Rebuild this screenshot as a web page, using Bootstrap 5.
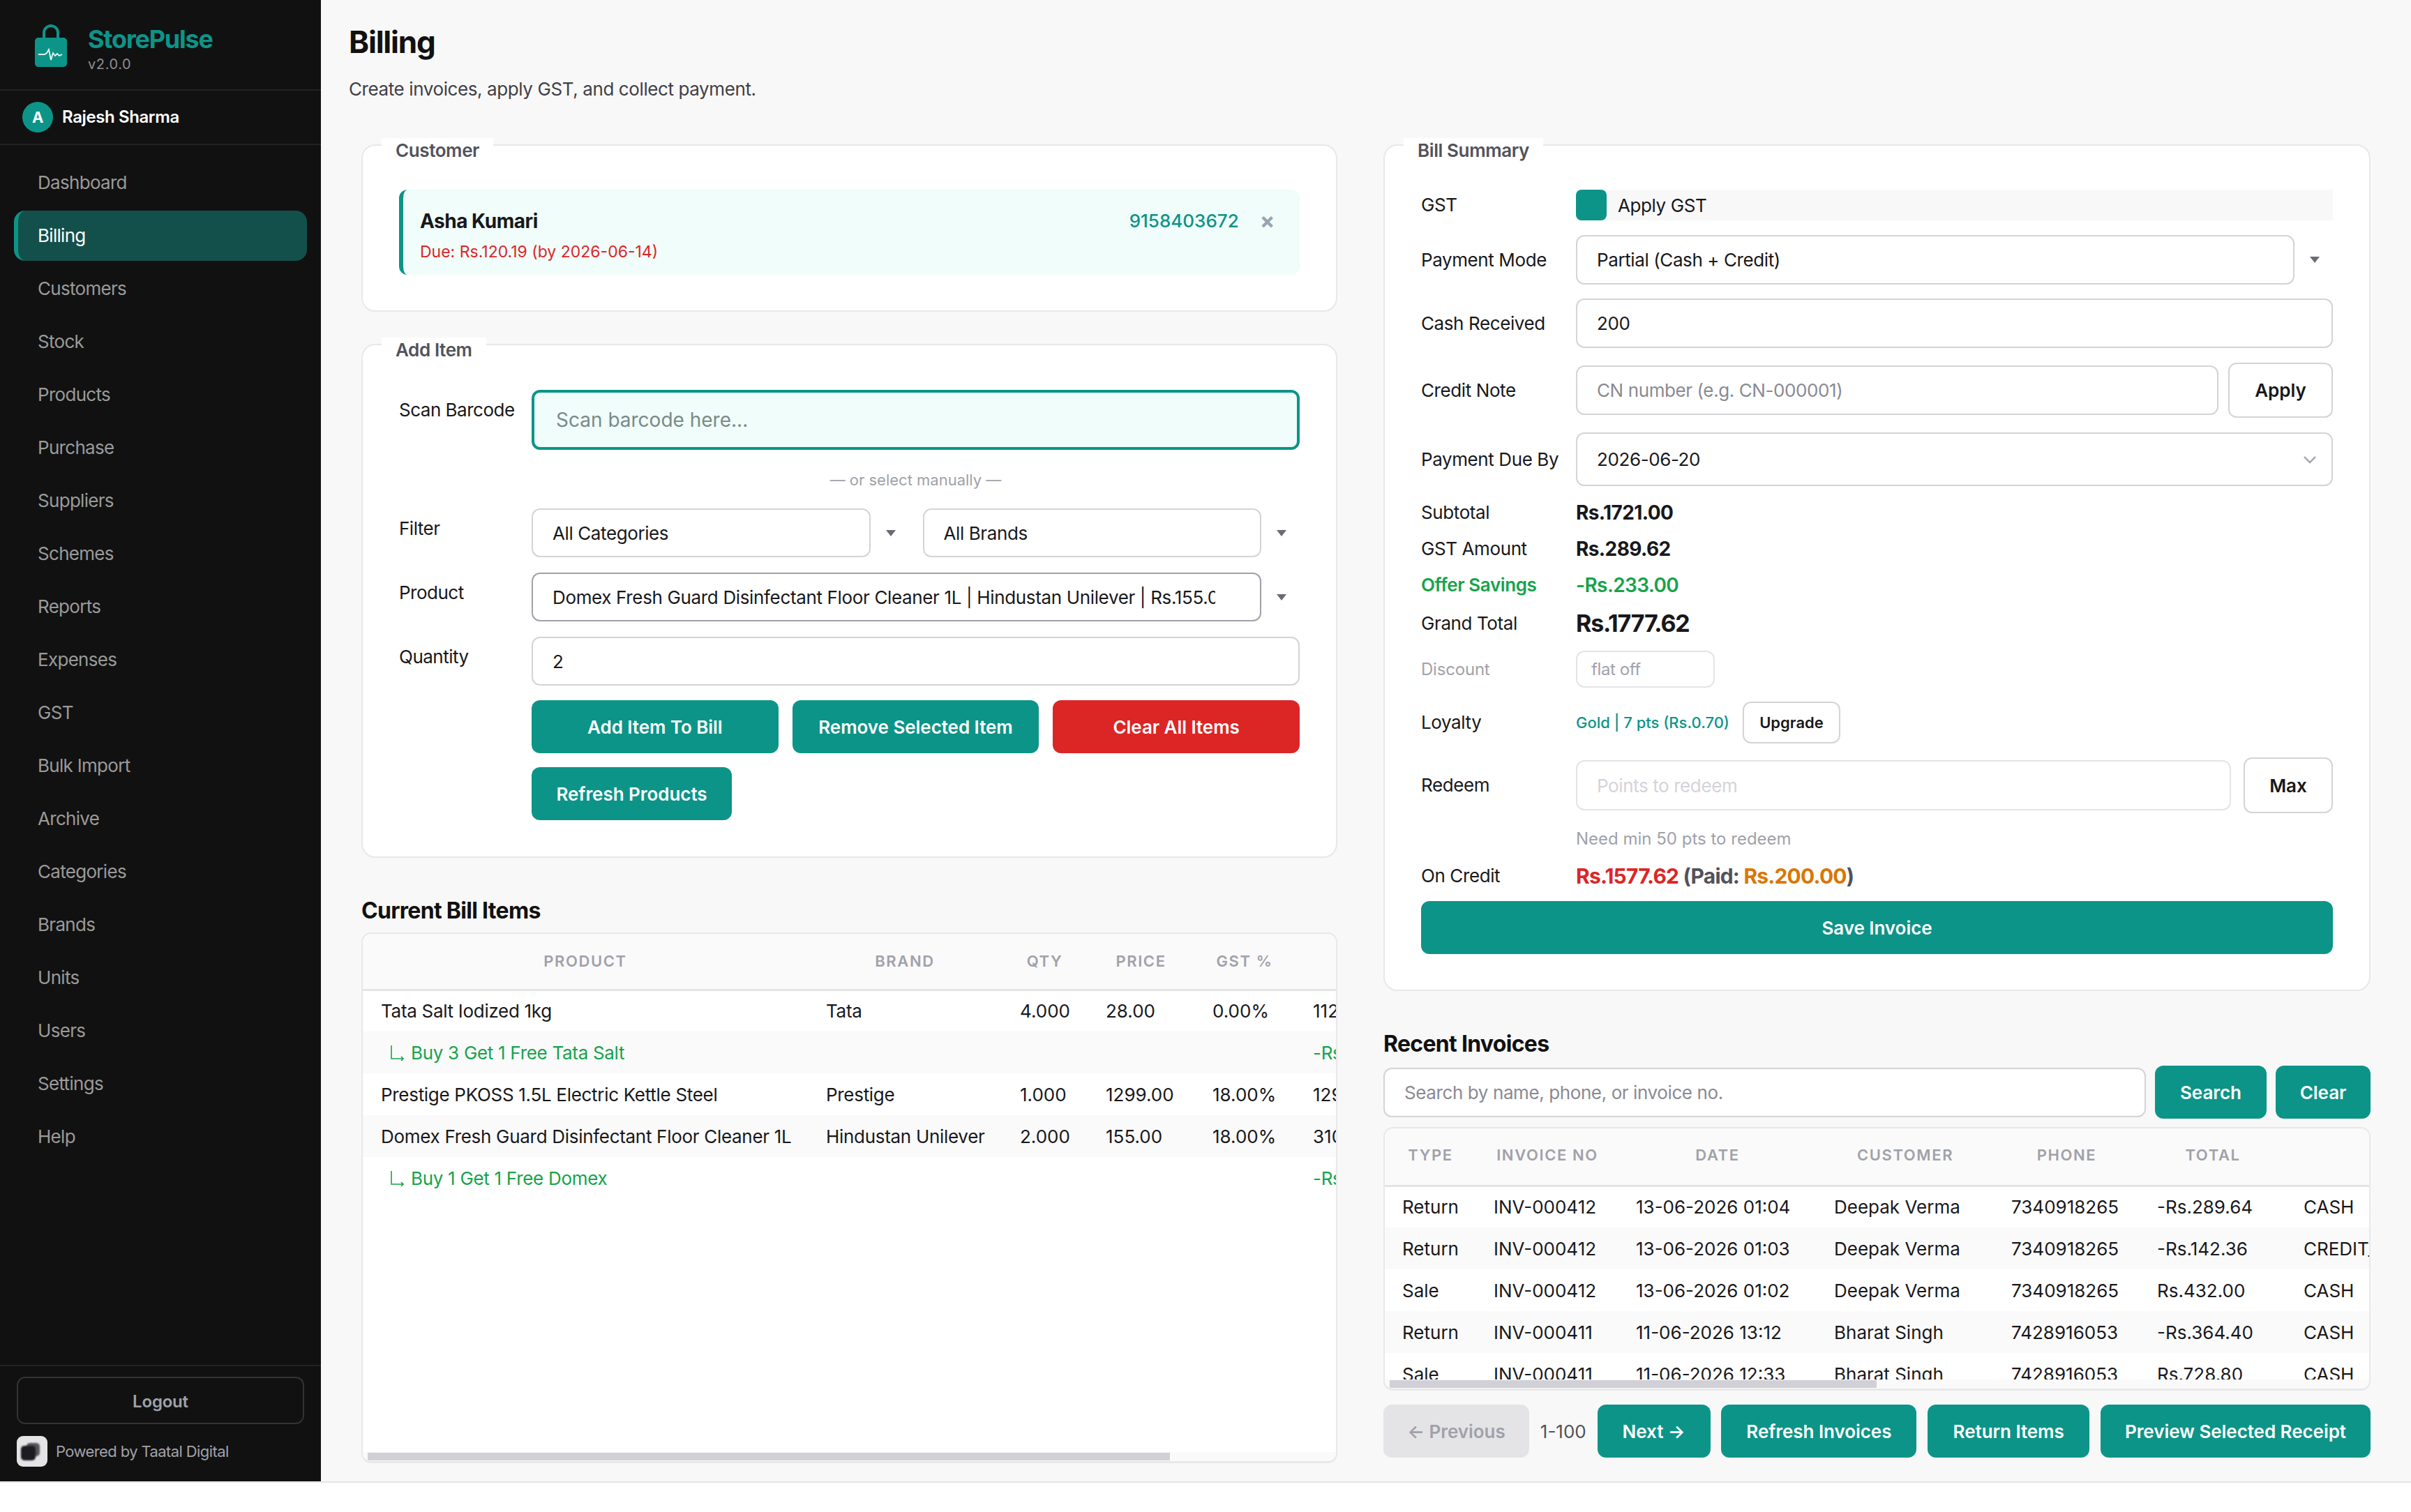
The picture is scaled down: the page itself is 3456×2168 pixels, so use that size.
<!DOCTYPE html>
<html lang="en">
<head>
<meta charset="UTF-8">
<title>StorePulse - Billing</title>
<link rel="stylesheet" href="https://cdn.jsdelivr.net/npm/bootstrap@5.3.3/dist/css/bootstrap.min.css">
<style>
    html, body { height: 100%; }
    body { background: #fff; font-family: Inter, "Liberation Sans", sans-serif; font-size: 26px; letter-spacing: -.4px; color: #18181b; overflow: hidden; }
    .app-frame { height: 2126px; border-bottom: 2px solid #e4e4e7; background: #f8f8f8; }

    /* sidebar */
    .side-panel { width: 460px; flex: none; background: #111; }
    .side-head { height: 130px; border-bottom: 2px solid #222; padding-left: 40px; gap: 20px; }
    .side-head svg { margin-top: 6px; }
    .brand-text { padding-top: 11px; }
    .brand-name { font-size: 36px; line-height: 40px; font-weight: 700; color: #0d9488; letter-spacing: -1.2px; }
    .brand-ver { font-size: 20px; line-height: 24px; color: #8e8e96; letter-spacing: .6px; margin-top: 4px; }
    .side-user { height: 78px; border-bottom: 2px solid #222; padding-left: 32px; gap: 13px; color: #fff; font-size: 24px; font-weight: 600; }
    .user-dot { width: 44px; height: 44px; border-radius: 50%; background: #0d9488; color: #fff; font-size: 22px; font-weight: 700; }
    .side-nav { padding: 18px 20px 0; gap: 4px; }
    .side-link { height: 72px; line-height: 72px; padding-left: 34px; color: #9a9a9a; border-radius: 16px; text-decoration: none; letter-spacing: -.7px; }
    .side-link.is-on { background: #14504b; color: #fff; border-left: 6px solid #0d9488; padding-left: 28px; }
    .side-foot { border-top: 2px solid #222; padding: 15px 24px 21px; }
    .logout-btn { width: 100%; height: 68px; padding: 4px 0 0; background: transparent; border: 2px solid #333; border-radius: 12px; color: #a1a1aa; font-size: 24px; font-weight: 600; letter-spacing: -.2px; }
    .logout-btn:hover { background: transparent; color: #a1a1aa; border-color: #333; }
    .powered-by { margin-top: 17px; gap: 12px; font-size: 22px; color: #a1a1aa; letter-spacing: -.6px; }

    /* main */
    .main-area { height: 2124px; padding: 34px 58px 26px 40px; min-width: 0; }
    .page-title { font-size: 44px; line-height: 52px; font-weight: 700; letter-spacing: -1.2px; margin: 0; color: #111; }
    .page-sub { line-height: 36px; margin: 24px 0 0; color: #3f3f46; }
    .two-cols { margin-top: 61px; padding-left: 18px; gap: 66px; min-height: 0; }
    .col-left { width: 1399px; flex: none; min-height: 0; }
    .col-right { width: 1415px; flex: none; min-height: 0; }

    .field-box { position: relative; background: #fff; border: 2px solid #e8e8ea; border-radius: 20px; padding: 63px 52px 51px; }
    .mt-add { margin-top: 46px; padding-top: 64px; padding-bottom: 52px; }
    .field-tag { position: absolute; top: -11px; left: 27px; height: 40px; padding: 0 20px; line-height: 36px; background: #fff; color: #52525b; font-weight: 600; }
    .section-head { font-size: 32px; line-height: 40px; font-weight: 700; letter-spacing: -.7px; color: #111; margin: 0; }
    .head-bill { margin-top: 56px; margin-bottom: 11px; }
    .head-inv { margin-top: 56px; }

    .cust-box { height: 122px; background: #f0fdfa; border-left: 6px solid #0d9488; border-radius: 12px; padding: 27px 36px 0 24px; }
    .cust-name { font-size: 28px; line-height: 36px; font-weight: 700; letter-spacing: -.5px; color: #18181b; }
    .cust-due { font-size: 23px; line-height: 28px; color: #dc2626; margin-top: 12px; letter-spacing: 0; }
    .cust-phone { color: #0d9488; font-weight: 500; line-height: 36px; letter-spacing: 0; }
    .cust-x { font-size: 32px; line-height: 36px; font-weight: 700; color: #9ca3af; margin-left: 30px; }

    .row-label { width: 190px; flex: none; line-height: 36px; padding-top: 11px; margin: 0; letter-spacing: -.5px; }
    .sum-label { width: 222px; flex: none; line-height: 36px; }
    .gap-or { margin-top: 28px; }
    .gap-filter { margin-top: 26px; }
    .gap-next { margin-top: 22px; }
    .sel-gap { gap: 20px; }
    .form-control.fld, .form-select.fld { height: 70px; border: 2px solid #d4d4d8; border-radius: 12px; font-size: 26px; letter-spacing: -.4px; color: #18181b; padding: 0 28px; box-shadow: none; background-image: none; }
    .form-select.fld.clip-fld { padding-right: 64px; letter-spacing: -.35px; }
    .fld::placeholder { color: #8a8a92; }
    .form-control.fld.scan-fld { height: 86px; border: 4px solid #0d9488; background: #f0fdfa; font-size: 28px; letter-spacing: 0; padding: 0 31px; }
    .fld.scan-fld::placeholder { color: #7b8a88; }
    .form-select.fld.is-dark { border-color: #a1a1aa; }
    .form-control.fld.pay-fld, .form-select.fld.pay-fld { height: 71px; }
    .form-select.fld.due-fld { height: 77px; background-image: url("data:image/svg+xml,%3Csvg xmlns='http://www.w3.org/2000/svg' viewBox='0 0 20 12'%3E%3Cpath d='M2 2l8 8 8-8' fill='none' stroke='%23a1a1aa' stroke-width='2.4'/%3E%3C/svg%3E"); background-repeat: no-repeat; background-position: right 21px center; background-size: 20px 12px; }
    .form-control.fld.tiny-fld { width: 199px; height: 53px; font-size: 24px; padding: 0 20px; border-color: #e4e4e7; }
    .fld.tiny-fld::placeholder { color: #a1a1aa; }
    .form-control.fld.soft-fld { height: 72px; border-color: #e4e4e7; }
    .fld.soft-fld::placeholder { color: #d4d4d8; }
    .sel-wrap { flex: 1; min-width: 0; }
    .sel-wrap .fld { flex: 1; min-width: 0; }
    .sel-caret { flex: none; width: 0; height: 0; margin: 0 19px 0 22px; border-left: 7.5px solid transparent; border-right: 7.5px solid transparent; border-top: 9px solid #6b6b73; }
    .or-line { line-height: 30px; font-size: 22px; letter-spacing: 0; color: #a1a1aa; text-align: center; margin-left: 190px; }

    .btn.teal-btn, .btn.red-btn { height: 76px; border: 0; border-radius: 12px; font-size: 26px; font-weight: 600; letter-spacing: -.05px; color: #fff; background: #0d9488; padding: 0; white-space: nowrap; flex: none; }
    .btn.red-btn { background: #dc2626; }
    .btn.teal-btn.is-off { background: #e4e4e7; color: #a1a1aa; opacity: 1; }
    .btn.plain-btn { background: #fff; border: 2px solid #d4d4d8; border-radius: 12px; font-size: 26px; font-weight: 600; letter-spacing: 0; color: #18181b; flex: none; padding: 0; }
    .btn-trio { display: grid; grid-template-columns: repeat(3, 1fr); gap: 20px; }
    .item-actions { margin-left: 190px; margin-top: 21px; }
    .btn.refresh-btn { display: block; width: 287px; margin-top: 20px; }
    .btn.apply-btn { width: 150px; height: 79px; margin-left: 14px; }
    .btn.upgrade-btn { width: 140px; height: 60px; font-size: 22px; }
    .btn.max-btn { width: 128px; height: 80px; margin-left: 18px; }
    .btn.save-btn { margin-top: 18px; }
    .btn.search-btn { width: 160px; }
    .btn.clear-btn { width: 136px; }

    .sr-16 { margin-top: 16px; } .sr-17 { margin-top: 17px; } .sr-19 { margin-top: 19px; } .sr-20 { margin-top: 20px; } .sr-21 { margin-top: 21px; }
    .gst-row { height: 44px; background: #f8f8f8; }
    .gst-check { width: 44px; height: 44px; background: #0d9488; border-radius: 8px; margin-right: 16px; }
    .sum-val { font-size: 28px; line-height: 36px; font-weight: 700; letter-spacing: -.6px; color: #18181b; }
    .sum-big { font-size: 34px; line-height: 40px; letter-spacing: -1.2px; }
    .is-green { color: #16a34a; font-weight: 600; }
    .hint-text { font-size: 24px; line-height: 36px; letter-spacing: 0; color: #a1a1aa; margin-left: 222px; }
    .loy-text { font-size: 22px; letter-spacing: 0; color: #0d9488; margin-right: 19px; font-weight: 500; }
    .dim-label { color: #a1a1aa; font-size: 24px; letter-spacing: -.2px; }
    .sum-val.credit-val { font-size: 30px; letter-spacing: -.8px; color: #52525b; }
    .c-red { color: #dc2626; }
    .c-amber { color: #d97706; }

    /* tables */
    .grid-shell { position: relative; background: #fff; border: 2px solid #e8e8ea; border-bottom-width: 3px; border-radius: 14px; overflow: hidden; min-height: 0; }
    .grid-scroll { height: 100%; overflow: hidden; }
    .table.grid-table { table-layout: fixed; margin: 0; white-space: nowrap; font-size: 26px; }
    .table.grid-table > thead > tr > th { height: 80px; padding: 0 25px; background: #fafafa; border-bottom: 3px solid #e4e4e7; color: #a1a1aa; font-size: 22px; font-weight: 600; letter-spacing: 1.6px; text-align: center; vertical-align: middle; text-transform: uppercase; }
    .table.grid-table > tbody > tr > td { height: 60px; padding: 0 25px; vertical-align: middle; color: #18181b; border: 0; overflow: hidden; letter-spacing: 0; }
    .table.left-table > tbody > tr > td { padding-left: 26px; }
    .table.left-table > tbody > tr > td:nth-child(-n+2) { letter-spacing: -.3px; }
    .table.right-table > thead > tr > th { height: 82px; padding-bottom: 3px; }
    .table.grid-table > tbody > tr:nth-child(even) > td { background: #fafafa; }
    .table.grid-table > tbody > tr > td.is-offer { color: #16a34a; }
    .offer-arrow { margin: 0 8px 0 13px; vertical-align: -3px; }
    .left-table { width: 1678px; }
    .right-table { width: 2820px; }
    .lc1 { width: 638px; } .lc2 { width: 278px; } .lc3 { width: 123px; } .lc4 { width: 153px; } .lc5 { width: 144px; } .lc6 { width: 342px; }
    .rc1 { width: 131px; } .rc2 { width: 204px; } .rc3 { width: 284px; } .rc4 { width: 254px; } .rc5 { width: 209px; } .rc6 { width: 210px; } .rc7 { width: 764px; } .rc8 { width: 764px; }
    .bar-track { position: absolute; left: 0; right: 0; bottom: 0; height: 13px; background: #fafafa; }
    .bar-thumb { position: absolute; left: 7px; top: 1px; height: 11px; background: #d0d0d6; }
    .bar-bill { width: 1150px; }
    .bar-inv { width: 698px; }
    .search-row { margin-top: 11px; gap: 13px; }
    .form-control.fld.search-fld { height: 71px; flex: 1; width: auto; min-width: 0; }
    .inv-shell { height: 378px; margin-top: 12px; flex: none; }
    .pager-row { margin-top: 20px; }
    .pager-count { color: #52525b; white-space: nowrap; letter-spacing: 0; }
    .btn.pg-prev { width: 209px; } .btn.pg-next { width: 162px; } .btn.pg-refresh { width: 280px; } .btn.pg-return { width: 232px; } .btn.pg-preview { width: 387px; }
</style>
</head>
<body>
<div class="app-frame d-flex">

    <aside class="side-panel d-flex flex-column">
        <div class="side-head d-flex align-items-center">
            <svg width="66" height="66" viewBox="40 34 56 66">
                <path d="M58 56V47a10 10 0 0 1 20 0v9" fill="none" stroke="#0d9488" stroke-width="4"/>
                <rect x="45" y="54" width="46" height="42" rx="5" fill="#0d9488"/>
                <path d="M50 78h9l3-2 3-5 3 15 3-10 3 4 3-3 3 3 4-2" fill="none" stroke="#e6f7f4" stroke-width="1.8"/>
            </svg>
            <div class="brand-text">
                <div class="brand-name">StorePulse</div>
                <div class="brand-ver">v2.0.0</div>
            </div>
        </div>
        <div class="side-user d-flex align-items-center">
            <span class="user-dot d-flex align-items-center justify-content-center">A</span>
            <span>Rajesh Sharma</span>
        </div>
        <nav class="side-nav d-flex flex-column flex-grow-1">
            <a class="side-link" href="#">Dashboard</a>
            <a class="side-link is-on" href="#">Billing</a>
            <a class="side-link" href="#">Customers</a>
            <a class="side-link" href="#">Stock</a>
            <a class="side-link" href="#">Products</a>
            <a class="side-link" href="#">Purchase</a>
            <a class="side-link" href="#">Suppliers</a>
            <a class="side-link" href="#">Schemes</a>
            <a class="side-link" href="#">Reports</a>
            <a class="side-link" href="#">Expenses</a>
            <a class="side-link" href="#">GST</a>
            <a class="side-link" href="#">Bulk Import</a>
            <a class="side-link" href="#">Archive</a>
            <a class="side-link" href="#">Categories</a>
            <a class="side-link" href="#">Brands</a>
            <a class="side-link" href="#">Units</a>
            <a class="side-link" href="#">Users</a>
            <a class="side-link" href="#">Settings</a>
            <a class="side-link" href="#">Help</a>
        </nav>
        <div class="side-foot">
            <button class="btn logout-btn" type="button">Logout</button>
            <div class="powered-by d-flex align-items-center">
                <svg width="44" height="44" viewBox="0 0 44 44">
                    <defs><filter id="soft"><feGaussianBlur stdDeviation="0.8"/></filter></defs>
                    <rect width="44" height="44" rx="9" fill="#e4e4e7"/>
                    <rect x="14" y="10" width="19" height="19" rx="5" fill="#55555c" filter="url(#soft)"/>
                    <rect x="6" y="14" width="21" height="21" rx="5" fill="#1c1c20" filter="url(#soft)"/>
                </svg>
                <span>Powered by Taatal Digital</span>
            </div>
        </div>
    </aside>

    <main class="main-area d-flex flex-column flex-grow-1">
        <h1 class="page-title">Billing</h1>
        <p class="page-sub">Create invoices, apply GST, and collect payment.</p>

        <div class="two-cols d-flex flex-grow-1">
            <div class="col-left d-flex flex-column">
                <section class="field-box">
                    <div class="field-tag">Customer</div>
                    <div class="cust-box d-flex justify-content-between align-items-start">
                        <div>
                            <div class="cust-name">Asha Kumari</div>
                            <div class="cust-due">Due: Rs.120.19 (by 2026-06-14)</div>
                        </div>
                        <div class="d-flex">
                            <span class="cust-phone">9158403672</span>
                            <span class="cust-x">&times;</span>
                        </div>
                    </div>
                </section>

                <section class="field-box mt-add">
                    <div class="field-tag">Add Item</div>
                    <div class="d-flex">
                        <label class="row-label">Scan Barcode</label>
                        <input class="form-control fld scan-fld" placeholder="Scan barcode here...">
                    </div>
                    <div class="or-line gap-or">&mdash; or select manually &mdash;</div>
                    <div class="d-flex gap-filter">
                        <label class="row-label">Filter</label>
                        <div class="d-flex flex-grow-1 sel-gap">
                            <div class="sel-wrap d-flex align-items-center">
                                <select class="form-select fld"><option>All Categories</option></select>
                                <span class="sel-caret"></span>
                            </div>
                            <div class="sel-wrap d-flex align-items-center">
                                <select class="form-select fld"><option>All Brands</option></select>
                                <span class="sel-caret"></span>
                            </div>
                        </div>
                    </div>
                    <div class="d-flex gap-next">
                        <label class="row-label">Product</label>
                        <div class="sel-wrap d-flex align-items-center">
                            <select class="form-select fld is-dark clip-fld"><option>Domex Fresh Guard Disinfectant Floor Cleaner 1L | Hindustan Unilever | Rs.155.00 | Stock: 24</option></select>
                            <span class="sel-caret"></span>
                        </div>
                    </div>
                    <div class="d-flex gap-next">
                        <label class="row-label">Quantity</label>
                        <input class="form-control fld" value="2">
                    </div>
                    <div class="item-actions">
                        <div class="btn-trio">
                            <button class="btn teal-btn" type="button">Add Item To Bill</button>
                            <button class="btn teal-btn" type="button">Remove Selected Item</button>
                            <button class="btn red-btn" type="button">Clear All Items</button>
                        </div>
                        <button class="btn teal-btn refresh-btn" type="button">Refresh Products</button>
                    </div>
                </section>

                <h2 class="section-head head-bill">Current Bill Items</h2>
                <div class="grid-shell flex-grow-1">
                    <div class="grid-scroll">
                        <table class="table grid-table left-table">
                            <colgroup><col class="lc1"><col class="lc2"><col class="lc3"><col class="lc4"><col class="lc5"><col class="lc6"></colgroup>
                            <thead>
                                <tr><th>Product</th><th>Brand</th><th>Qty</th><th>Price</th><th>GST %</th><th>Total</th></tr>
                            </thead>
                            <tbody>
                                <tr><td>Tata Salt Iodized 1kg</td><td>Tata</td><td>4.000</td><td>28.00</td><td>0.00%</td><td>112.00</td></tr>
                                <tr><td class="is-offer" colspan="5"><svg class="offer-arrow" width="22" height="24" viewBox="0 0 22 24"><path d="M2 1v19h17m-3-3l3 3-3 3" fill="none" stroke="#16a34a" stroke-width="1.6"/></svg>Buy 3 Get 1 Free Tata Salt</td><td class="is-offer">-Rs.28.00</td></tr>
                                <tr><td>Prestige PKOSS 1.5L Electric Kettle Steel</td><td>Prestige</td><td>1.000</td><td>1299.00</td><td>18.00%</td><td>1299.00</td></tr>
                                <tr><td>Domex Fresh Guard Disinfectant Floor Cleaner 1L</td><td>Hindustan Unilever</td><td>2.000</td><td>155.00</td><td>18.00%</td><td>310.00</td></tr>
                                <tr><td class="is-offer" colspan="5"><svg class="offer-arrow" width="22" height="24" viewBox="0 0 22 24"><path d="M2 1v19h17m-3-3l3 3-3 3" fill="none" stroke="#16a34a" stroke-width="1.6"/></svg>Buy 1 Get 1 Free Domex</td><td class="is-offer">-Rs.155.00</td></tr>
                            </tbody>
                        </table>
                    </div>
                    <div class="bar-track"><div class="bar-thumb bar-bill"></div></div>
                </div>
            </div>

            <div class="col-right d-flex flex-column">
                <section class="field-box">
                    <div class="field-tag">Bill Summary</div>
                    <div class="d-flex align-items-center">
                        <span class="sum-label">GST</span>
                        <div class="gst-row d-flex align-items-center flex-grow-1">
                            <span class="gst-check"></span><span>Apply GST</span>
                        </div>
                    </div>
                    <div class="d-flex align-items-center sr-21">
                        <span class="sum-label">Payment Mode</span>
                        <div class="sel-wrap d-flex align-items-center">
                            <select class="form-select fld pay-fld"><option>Partial (Cash + Credit)</option></select>
                            <span class="sel-caret"></span>
                        </div>
                    </div>
                    <div class="d-flex align-items-center sr-20">
                        <span class="sum-label">Cash Received</span>
                        <input class="form-control fld pay-fld" value="200">
                    </div>
                    <div class="d-flex align-items-center sr-21">
                        <span class="sum-label">Credit Note</span>
                        <input class="form-control fld pay-fld" placeholder="CN number (e.g. CN-000001)">
                        <button class="btn plain-btn apply-btn" type="button">Apply</button>
                    </div>
                    <div class="d-flex align-items-center sr-21">
                        <span class="sum-label">Payment Due By</span>
                        <select class="form-select fld due-fld"><option>2026-06-20</option></select>
                    </div>
                    <div class="d-flex align-items-center sr-20">
                        <span class="sum-label">Subtotal</span><span class="sum-val">Rs.1721.00</span>
                    </div>
                    <div class="d-flex align-items-center sr-16">
                        <span class="sum-label">GST Amount</span><span class="sum-val">Rs.289.62</span>
                    </div>
                    <div class="d-flex align-items-center sr-16">
                        <span class="sum-label is-green">Offer Savings</span><span class="sum-val is-green">-Rs.233.00</span>
                    </div>
                    <div class="d-flex align-items-center sr-17">
                        <span class="sum-label">Grand Total</span><span class="sum-val sum-big">Rs.1777.62</span>
                    </div>
                    <div class="d-flex align-items-center sr-19">
                        <span class="sum-label dim-label">Discount</span>
                        <input class="form-control fld tiny-fld" placeholder="flat off">
                    </div>
                    <div class="d-flex align-items-center sr-20">
                        <span class="sum-label">Loyalty</span>
                        <span class="loy-text">Gold | 7 pts (Rs.0.70)</span>
                        <button class="btn plain-btn upgrade-btn" type="button">Upgrade</button>
                    </div>
                    <div class="d-flex align-items-center sr-20">
                        <span class="sum-label">Redeem</span>
                        <input class="form-control fld soft-fld" placeholder="Points to redeem">
                        <button class="btn plain-btn max-btn" type="button">Max</button>
                    </div>
                    <div class="hint-text sr-19">Need min 50 pts to redeem</div>
                    <div class="d-flex align-items-center sr-17">
                        <span class="sum-label">On Credit</span>
                        <span class="sum-val credit-val"><span class="c-red">Rs.1577.62</span> (Paid: <span class="c-amber">Rs.200.00</span>)</span>
                    </div>
                    <button class="btn teal-btn w-100 save-btn" type="button">Save Invoice</button>
                </section>

                <h2 class="section-head head-inv">Recent Invoices</h2>
                <div class="search-row d-flex align-items-center">
                    <input class="form-control fld search-fld" placeholder="Search by name, phone, or invoice no.">
                    <button class="btn teal-btn search-btn" type="button">Search</button>
                    <button class="btn teal-btn clear-btn" type="button">Clear</button>
                </div>
                <div class="grid-shell inv-shell">
                    <div class="grid-scroll">
                        <table class="table grid-table right-table">
                            <colgroup><col class="rc1"><col class="rc2"><col class="rc3"><col class="rc4"><col class="rc5"><col class="rc6"><col class="rc7"><col class="rc8"></colgroup>
                            <thead>
                                <tr><th>Type</th><th>Invoice No</th><th>Date</th><th>Customer</th><th>Phone</th><th>Total</th><th>Payment</th><th>Status</th></tr>
                            </thead>
                            <tbody>
                                <tr><td>Return</td><td>INV-000412</td><td>13-06-2026 01:04</td><td>Deepak Verma</td><td>7340918265</td><td>-Rs.289.64</td><td>CASH</td><td>Done</td></tr>
                                <tr><td>Return</td><td>INV-000412</td><td>13-06-2026 01:03</td><td>Deepak Verma</td><td>7340918265</td><td>-Rs.142.36</td><td>CREDIT_NOTE</td><td>Done</td></tr>
                                <tr><td>Sale</td><td>INV-000412</td><td>13-06-2026 01:02</td><td>Deepak Verma</td><td>7340918265</td><td>Rs.432.00</td><td>CASH</td><td>Done</td></tr>
                                <tr><td>Return</td><td>INV-000411</td><td>11-06-2026 13:12</td><td>Bharat Singh</td><td>7428916053</td><td>-Rs.364.40</td><td>CASH</td><td>Done</td></tr>
                                <tr><td>Sale</td><td>INV-000411</td><td>11-06-2026 12:33</td><td>Bharat Singh</td><td>7428916053</td><td>Rs.728.80</td><td>CASH</td><td>Done</td></tr>
                            </tbody>
                        </table>
                    </div>
                    <div class="bar-track"><div class="bar-thumb bar-inv"></div></div>
                </div>
                <div class="pager-row d-flex align-items-center justify-content-between">
                    <button class="btn teal-btn is-off pg-prev" type="button" disabled>&larr; Previous</button>
                    <span class="pager-count">1-100</span>
                    <button class="btn teal-btn pg-next" type="button">Next &rarr;</button>
                    <button class="btn teal-btn pg-refresh" type="button">Refresh Invoices</button>
                    <button class="btn teal-btn pg-return" type="button">Return Items</button>
                    <button class="btn teal-btn pg-preview" type="button">Preview Selected Receipt</button>
                </div>
            </div>
        </div>
    </main>
</div>
<script src="https://cdn.jsdelivr.net/npm/bootstrap@5.3.3/dist/js/bootstrap.bundle.min.js"></script>
</body>
</html>
